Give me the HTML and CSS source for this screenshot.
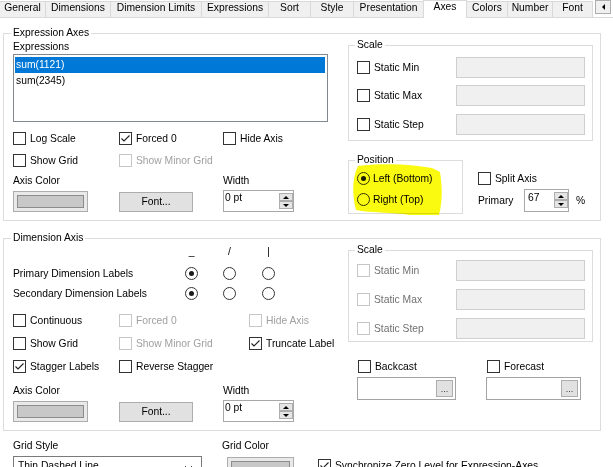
FILE: index.html
```html
<!DOCTYPE html>
<html lang="en">
<head>
<meta charset="utf-8">
<title>Chart Properties - Axes</title>
<link rel="stylesheet" href="styles.css">
</head>
<body>
<nav class="tabs">
  <div class="tab t-general">General</div>
  <div class="tab t-dims">Dimensions</div>
  <div class="tab t-limits">Dimension Limits</div>
  <div class="tab t-exprs">Expressions</div>
  <div class="tab t-sort">Sort</div>
  <div class="tab t-style">Style</div>
  <div class="tab t-pres">Presentation</div>
  <div class="tab t-axes active">Axes</div>
  <div class="tab t-colors">Colors</div>
  <div class="tab t-number">Number</div>
  <div class="tab t-font">Font</div>
  <div class="tab-scroll"><span class="arrow-left"></span></div>
</nav>

<main class="page">
  <section class="group expr">
    <div class="gtitle">Expression Axes</div>
    <div class="col-left">
      <div class="lbl lbl-exprs">Expressions</div>
      <div class="listbox">
        <div class="li selected">sum(1121)</div>
        <div class="li">sum(2345)</div>
      </div>
      <div class="crow first">
        <label class="chk"><span class="cb"></span>Log Scale</label>
        <label class="chk"><span class="cb"><svg width="11" height="11" viewBox="0 0 11 11"><path d="M1.5 5.5 L4 8 L9.5 2.5" fill="none" stroke="#1f1f1f" stroke-width="1.1"/></svg></span>Forced 0</label>
        <label class="chk"><span class="cb"></span>Hide Axis</label>
      </div>
      <div class="crow second">
        <label class="chk"><span class="cb"></span>Show Grid</label>
        <label class="chk dis"><span class="cb"></span>Show Minor Grid</label>
      </div>
      <div class="lrow">
        <div class="lbl">Axis Color</div>
        <div class="lbl">Width</div>
      </div>
      <div class="ctrls">
        <div class="colorbtn"><div class="swatch"></div></div>
        <div class="btn">Font...</div>
        <div class="spin spin-pt"><span class="spin-val">0 pt</span><span class="spin-btns"><span class="sb up"></span><span class="sb dn"></span></span></div>
      </div>
    </div>
    <div class="col-right">
      <div class="group small scale scale-exp">
        <div class="gtitle">Scale</div>
        <div class="srow s1"><label class="chk"><span class="cb"></span>Static Min</label><span class="field"></span></div>
        <div class="srow s2"><label class="chk"><span class="cb"></span>Static Max</label><span class="field"></span></div>
        <div class="srow s3"><label class="chk"><span class="cb"></span>Static Step</label><span class="field"></span></div>
      </div>
      <div class="posrow">
        <div class="group small position">
          <div class="gtitle">Position</div>
          <div class="rrow r1"><span class="rb on"></span>Left (Bottom)</div>
          <div class="rrow r2"><span class="rb"></span>Right (Top)</div>
        </div>
        <div class="split">
          <label class="chk"><span class="cb"></span>Split Axis</label>
          <div class="prim">
            <span class="prim-lbl">Primary</span>
            <div class="spin spin-pct"><span class="spin-val">67</span><span class="spin-btns"><span class="sb up"></span><span class="sb dn"></span></span></div>
            <span class="pct">%</span>
          </div>
        </div>
      </div>
    </div>
  </section>

  <section class="group dim">
    <div class="gtitle">Dimension Axis</div>
    <div class="dim-left">
      <div class="marks">
        <span></span><span class="mk">_</span><span class="mk">/</span><span class="mk">|</span>
      </div>
      <div class="rline p">
        <span>Primary Dimension Labels</span><span class="rb on"></span><span class="rb"></span><span class="rb"></span>
      </div>
      <div class="rline s">
        <span>Secondary Dimension Labels</span><span class="rb on"></span><span class="rb"></span><span class="rb"></span>
      </div>
      <div class="crow c1">
        <label class="chk"><span class="cb"></span>Continuous</label>
        <label class="chk dis"><span class="cb"></span>Forced 0</label>
        <label class="chk dis"><span class="cb"></span>Hide Axis</label>
      </div>
      <div class="crow c2">
        <label class="chk"><span class="cb"></span>Show Grid</label>
        <label class="chk dis"><span class="cb"></span>Show Minor Grid</label>
        <label class="chk"><span class="cb"><svg width="11" height="11" viewBox="0 0 11 11"><path d="M1.5 5.5 L4 8 L9.5 2.5" fill="none" stroke="#1f1f1f" stroke-width="1.1"/></svg></span>Truncate Label</label>
      </div>
      <div class="crow c3">
        <label class="chk"><span class="cb"><svg width="11" height="11" viewBox="0 0 11 11"><path d="M1.5 5.5 L4 8 L9.5 2.5" fill="none" stroke="#1f1f1f" stroke-width="1.1"/></svg></span>Stagger Labels</label>
        <label class="chk"><span class="cb"></span>Reverse Stagger</label>
      </div>
      <div class="lrow">
        <div class="lbl">Axis Color</div>
        <div class="lbl">Width</div>
      </div>
      <div class="ctrls">
        <div class="colorbtn"><div class="swatch"></div></div>
        <div class="btn">Font...</div>
        <div class="spin spin-pt"><span class="spin-val">0 pt</span><span class="spin-btns"><span class="sb up"></span><span class="sb dn"></span></span></div>
      </div>
    </div>
    <div class="dim-right">
      <div class="group small scale scale-dim">
        <div class="gtitle">Scale</div>
        <div class="srow s1"><label class="chk"><span class="cb"></span>Static Min</label><span class="field"></span></div>
        <div class="srow s2"><label class="chk"><span class="cb"></span>Static Max</label><span class="field"></span></div>
        <div class="srow s3"><label class="chk"><span class="cb"></span>Static Step</label><span class="field"></span></div>
      </div>
      <div class="casts">
        <div class="cast cast-a">
          <label class="chk"><span class="cb"></span>Backcast</label>
          <div class="pick"><span class="dots">...</span></div>
        </div>
        <div class="cast cast-b">
          <label class="chk"><span class="cb"></span>Forecast</label>
          <div class="pick"><span class="dots">...</span></div>
        </div>
      </div>
    </div>
  </section>

  <section class="bottom">
    <div class="bcol">
      <div class="lbl">Grid Style</div>
      <div class="dropdown"><span>Thin Dashed Line</span><svg class="chev" width="9" height="6" viewBox="0 0 9 6"><path d="M1 1 L4.5 4.5 L8 1" fill="none" stroke="#444" stroke-width="1"/></svg></div>
    </div>
    <div class="bcol">
      <div class="lbl">Grid Color</div>
      <div class="colorbtn gridcolor"><div class="swatch"></div></div>
    </div>
    <div class="bcol">
      <label class="chk sync"><span class="cb"><svg width="11" height="11" viewBox="0 0 11 11"><path d="M1.5 5.5 L4 8 L9.5 2.5" fill="none" stroke="#1f1f1f" stroke-width="1.1"/></svg></span>Synchronize Zero Level for Expression-Axes</label>
    </div>
  </section>
</main>

<svg class="highlight" width="100" height="60" viewBox="0 0 100 60"><path d="M8 6 C30 3 60 4 82 8 L90 12 C92 25 93 40 89 55 L60 55 C40 52 20 53 6 50 C2 35 2 18 8 6 Z" fill="#fafa10"/></svg>
</body>
</html>
```

FILE: styles.css
```css
* { box-sizing: border-box; }
html, body { margin: 0; padding: 0; }
body {
  width: 613px; height: 467px; overflow: hidden; position: relative;
  background: #fff; color: #000;
  font-family: "Liberation Sans", Arial, sans-serif;
  font-size: 10.3px; line-height: 12px;
}

/* Tabs */
.tabs { display: flex; align-items: flex-end; height: 18px; border-bottom: 1px solid #dadada; }
.tab {
  height: 16px; background: #f0f0f0;
  border-top: 1px solid #d9d9d9; border-left: 1px solid #d9d9d9;
  text-align: center; line-height: 12px; white-space: nowrap;
}
.t-general { width: 45px; border-left: none; }
.t-dims { width: 65px; }
.t-limits { width: 91px; }
.t-exprs { width: 67px; }
.t-sort { width: 42px; }
.t-style { width: 43px; }
.t-pres { width: 70px; }
.t-axes { width: 44px; }
.t-colors { width: 40px; border-left: none; }
.t-number { width: 45px; }
.t-font { width: 41px; border-right: 1px solid #d9d9d9; }
.tab.active {
  height: 18px; margin-bottom: -1px; background: #fff;
  border-right: 1px solid #d9d9d9;
}
.tab-scroll {
  align-self: flex-start; width: 16px; height: 14px; margin-left: 2px;
  border: 1px solid #adadad; background: #f0f0f0;
  display: flex; align-items: center; justify-content: center;
}
.arrow-left {
  width: 0; height: 0;
  border-top: 3px solid transparent; border-bottom: 3px solid transparent;
  border-right: 3px solid #000;
}

/* Groups */
.page { padding-left: 3px; }
.group { position: relative; border: 1px solid #dcdcdc; }
.gtitle {
  position: absolute; top: -7px; left: 7px; padding: 0 2px;
  background: #fff; line-height: 12px; white-space: nowrap;
}
.group.small .gtitle { left: 6px; }

.lbl { line-height: 12px; white-space: nowrap; }

/* Expression Axes */
.expr { margin-top: 15px; width: 598px; height: 188px; display: flex; padding-left: 9px; }
.col-left { width: 315px; display: flex; flex-direction: column; }
.lbl-exprs { margin-top: 7px; }
.listbox { margin-top: 1px; height: 68px; border: 1px solid #828790; padding: 2px 2px 0 1px; }
.li { height: 16px; line-height: 16px; padding-left: 1px; }
.li.selected { background: #0078d7; color: #fff; }

.crow { display: grid; grid-template-columns: 106px 104px auto; height: 13px; align-items: center; }
.expr .crow.first { margin-top: 10px; }
.expr .crow.second { margin-top: 9px; }
.chk { display: flex; align-items: center; gap: 4px; white-space: nowrap; height: 13px; }
.cb {
  width: 13px; height: 13px; border: 1px solid #333; background: #fff; flex: none;
  display: flex; align-items: center; justify-content: center;
}
.cb svg { display: block; }
.chk.dis { color: #a0a0a0; }
.chk.dis .cb { border-color: #c6c6c6; }

.lrow { display: grid; grid-template-columns: 210px auto; }
.expr .lrow { margin-top: 8px; }
.ctrls { display: grid; grid-template-columns: 106px 104px auto; align-items: start; margin-top: 3px; }
.colorbtn { margin-top: 1px; width: 75px; height: 21px; border: 1px solid #adadad; background: #e9e9e9; padding: 3px; }
.swatch { height: 100%; background: #c8c8c8; border: 1px solid #8c8c8c; }
.btn {
  margin-top: 2px; width: 74px; height: 20px; border: 1px solid #adadad; background: #e1e1e1;
  text-align: center; line-height: 18px;
}
.spin { display: flex; border: 1px solid #a8a8a8; background: #fff; }
.spin-pt { width: 71px; height: 22px; }
.spin-val { padding: 1px 0 0 1px; }
.spin-pct .spin-val { padding: 2px 0 0 3px; }
.spin-btns { margin-left: auto; display: flex; flex-direction: column; gap: 0; padding-top: 2px; }
.sb {
  width: 14px; height: 8px; border: 1px solid #adadad; background: #e5e5e5;
  display: flex; align-items: center; justify-content: center;
}
.sb.up::before { content: ""; border-left: 3px solid transparent; border-right: 3px solid transparent; border-bottom: 3px solid #000; }
.sb.dn::before { content: ""; border-left: 3px solid transparent; border-right: 3px solid transparent; border-top: 3px solid #000; }

.col-right { margin-left: 20px; width: 245px; display: flex; flex-direction: column; }
.scale { display: flex; flex-direction: column; padding: 0 7px 0 8px; }
.scale-exp { margin-top: 11px; height: 96px; }
.scale-exp .s1 { margin-top: 11px; }
.scale-exp .s2 { margin-top: 7px; }
.scale-exp .s3 { margin-top: 8px; }
.srow { display: flex; align-items: center; justify-content: space-between; height: 21px; }
.field { width: 129px; height: 21px; background: #f0f0f0; border: 1px solid #cfcfcf; }

.posrow { display: flex; margin-top: 19px; }
.position { width: 115px; height: 54px; display: flex; flex-direction: column; padding-left: 8px; }
.rrow { display: flex; align-items: center; gap: 3px; height: 13px; white-space: nowrap; }
.position .r1 { margin-top: 11px; }
.position .r2 { margin-top: 8px; }
.rb {
  width: 13px; height: 13px; border: 1px solid #333; border-radius: 50%; background: #fff; flex: none;
  display: flex; align-items: center; justify-content: center;
}
.rb.on::after { content: ""; width: 5px; height: 5px; border-radius: 50%; background: #1a1a1a; }

.split { margin-left: 15px; display: flex; flex-direction: column; }
.split .chk { margin-top: 12px; }
.prim { display: flex; align-items: center; margin-top: 4px; }
.prim-lbl { width: 46px; }
.spin-pct { width: 45px; height: 23px; }
.pct { margin-left: 7px; }

/* Dimension Axis */
.dim { margin-top: 17px; width: 598px; height: 193px; display: flex; padding-left: 9px; }
.dim-left { width: 320px; display: flex; flex-direction: column; }
.marks, .rline { display: grid; grid-template-columns: 172px 38px 39px 13px; }
.marks { margin-top: 7px; height: 12px; }
.mk { width: 13px; text-align: center; }
.rline { height: 13px; align-items: center; white-space: nowrap; }
.rline.p { margin-top: 9px; }
.rline.s { margin-top: 7px; }
.dim .crow { grid-template-columns: 106px 130px auto; }
.dim .crow.c1 { margin-top: 14px; }
.dim .crow.c2 { margin-top: 10px; }
.dim .crow.c3 { margin-top: 10px; }
.dim .lrow { margin-top: 12px; }

.dim-right { margin-left: 15px; width: 245px; display: flex; flex-direction: column; }
.scale-dim { margin-top: 11px; height: 92px; }
.scale-dim .s1 { margin-top: 9px; }
.scale-dim .s2 { margin-top: 8px; }
.scale-dim .s3 { margin-top: 8px; }
.scale-dim .chk { color: #707070; }
.scale-dim .cb { border-color: #c6c6c6; }

.casts { display: flex; margin-top: 18px; padding-left: 9px; gap: 30px; }
.cast { display: flex; flex-direction: column; }
.cast .chk { margin-left: 1px; }
.cast-a { width: 99px; }
.cast-b { width: 95px; }
.pick {
  margin-top: 4px; height: 23px; border: 1px solid #a3a3a3; background: #fff;
  display: flex; justify-content: flex-end; align-items: center; padding-right: 2px;
}
.dots {
  width: 17px; height: 17px; border: 1px solid #adadad; background: #e1e1e1;
  font-size: 9px; line-height: 17px; text-align: center; color: #333;
}

/* Bottom */
.bottom { display: grid; grid-template-columns: 209px 96px auto; margin-top: 9px; padding-left: 10px; }
.bcol { display: flex; flex-direction: column; }
.dropdown {
  margin-top: 4px; width: 189px; height: 21px; border: 1px solid #7a7a7a;
  padding: 3px 8px 0 4px; display: flex; justify-content: space-between; align-items: flex-start;
  white-space: nowrap;
}
.chev { margin-top: 5px; }
.gridcolor { margin: 5px 0 0 5px; width: 67px; }
.sync { margin-top: 19px; }

/* Annotation highlight */
.highlight { position: absolute; left: 350px; top: 160px; mix-blend-mode: multiply; }
```
